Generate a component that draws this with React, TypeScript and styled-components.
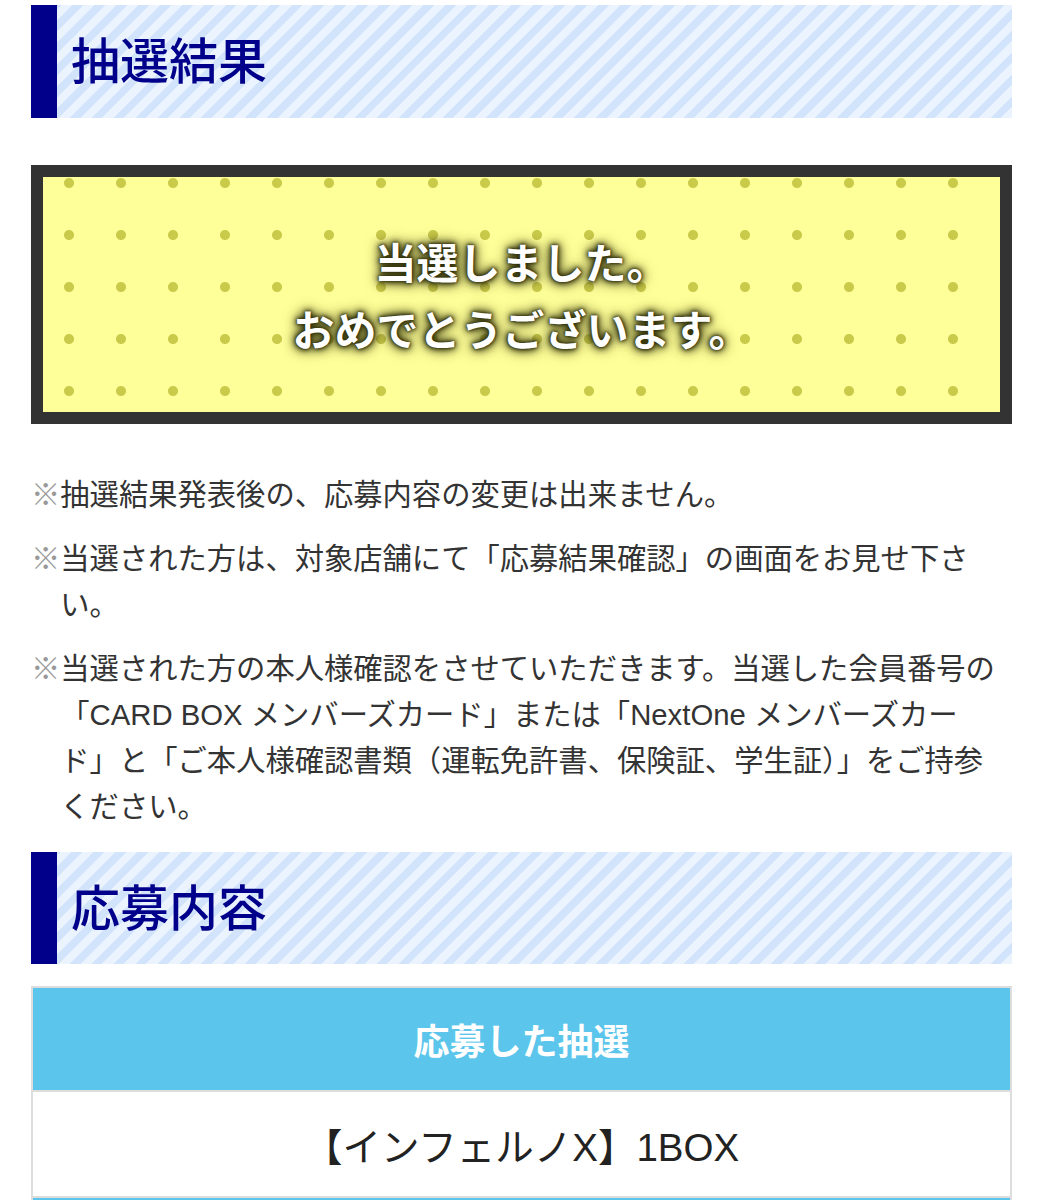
import React from "react";
import styled, { createGlobalStyle } from "styled-components";

const Global = createGlobalStyle`
  html, body { margin: 0; padding: 0; background: #fff; }
  body { font-family: "Liberation Sans", "Noto Sans CJK JP", sans-serif; color: #333; }
`;

const Page = styled.div`
  padding: 5px 31px 0 31px;
  display: flex;
  flex-direction: column;
`;

const Heading = styled.h2`
  margin: 0;
  height: 113px;
  box-sizing: border-box;
  display: flex;
  align-items: center;
  padding-left: 14px;
  padding-bottom: 8px;
  border-left: 26px solid #00008a;
  background: repeating-linear-gradient(
    -45deg,
    #eaf3fe 0px,
    #eaf3fe 8px,
    #d2e4fb 8px,
    #d2e4fb 15.5px
  );
  color: #00008a;
  font-family: "Noto Sans CJK JP", sans-serif;
  font-size: 49px;
  font-weight: 500;
`;

const ResultBox = styled.div`
  margin-top: 47px;
  height: 259px;
  box-sizing: border-box;
  border: 12px solid #333333;
  background-color: #ffff99;
  background-image: radial-gradient(circle, #c9c94a 0, #c9c94a 4.5px, rgba(201, 201, 74, 0) 5.5px);
  background-size: 52px 52px;
  background-position: 0 -20px;
  display: flex;
  flex-direction: column;
  align-items: center;
  justify-content: center;
  padding-bottom: 2px;
`;

const ResultLine = styled.div`
  color: #fff;
  font-family: "Noto Sans CJK JP", sans-serif;
  font-size: 42px;
  font-weight: 700;
  line-height: 67px;
  text-shadow: 0 0 2px #2e2e08, 0 0 4px #2e2e08, 0 0 7px #333310, 0 0 11px #3d3d12, 0 0 15px #55551a;
`;

const Notes = styled.div`
  margin-top: 45px;
  padding-right: 11px;
  display: flex;
  flex-direction: column;
  gap: 15px;
`;

const Note = styled.p`
  margin: 0;
  font-size: 29.3px;
  line-height: 46px;
  color: #333;
  padding-left: 1em;
  text-indent: -1em;
`;

const Mark = styled.span`
  color: #999;
  font-family: "Noto Sans CJK JP", sans-serif;
  font-weight: 700;
`;

const SecondHeading = styled(Heading)`
  margin-top: 22px;
  height: 112px;
`;

const Table = styled.table`
  margin-top: 22px;
  width: 100%;
  border-collapse: collapse;
  border: 2px solid #dddddd;
`;

const HeadCell = styled.th`
  background: #5bc5eb;
  color: #fff;
  font-family: "Noto Sans CJK JP", sans-serif;
  font-size: 36px;
  font-weight: 700;
  height: 102px;
  padding: 0;
  border: 2px solid #dddddd;
  text-align: center;
`;

const BodyCell = styled.td`
  background: #fff;
  color: #222;
  font-size: 38.5px;
  font-weight: 400;
  height: 104px;
  padding: 0;
  border: 2px solid #dddddd;
  text-align: center;
`;

export default function App() {
  return (
    <>
      <Global />
      <Page>
        <Heading>抽選結果</Heading>
        <ResultBox>
          <ResultLine>当選しました。</ResultLine>
          <ResultLine>おめでとうございます。</ResultLine>
        </ResultBox>
        <Notes>
          <Note>
            <Mark>※</Mark>抽選結果発表後の、応募内容の変更は出来ません。
          </Note>
          <Note>
            <Mark>※</Mark>当選された方は、対象店舗にて「応募結果確認」の画面をお見せ下さい。
          </Note>
          <Note>
            <Mark>※</Mark>当選された方の本人様確認をさせていただきます。当選した会員番号の「CARD BOX メンバーズカード」または「NextOne メンバーズカード」と「ご本人様確認書類（運転免許書、保険証、学生証）」をご持参ください。
          </Note>
        </Notes>
        <SecondHeading>応募内容</SecondHeading>
        <Table>
          <tbody>
            <tr>
              <HeadCell>応募した抽選</HeadCell>
            </tr>
            <tr>
              <BodyCell>【インフェルノX】1BOX</BodyCell>
            </tr>
            <tr>
              <HeadCell aria-hidden="true"></HeadCell>
            </tr>
          </tbody>
        </Table>
      </Page>
    </>
  );
}
